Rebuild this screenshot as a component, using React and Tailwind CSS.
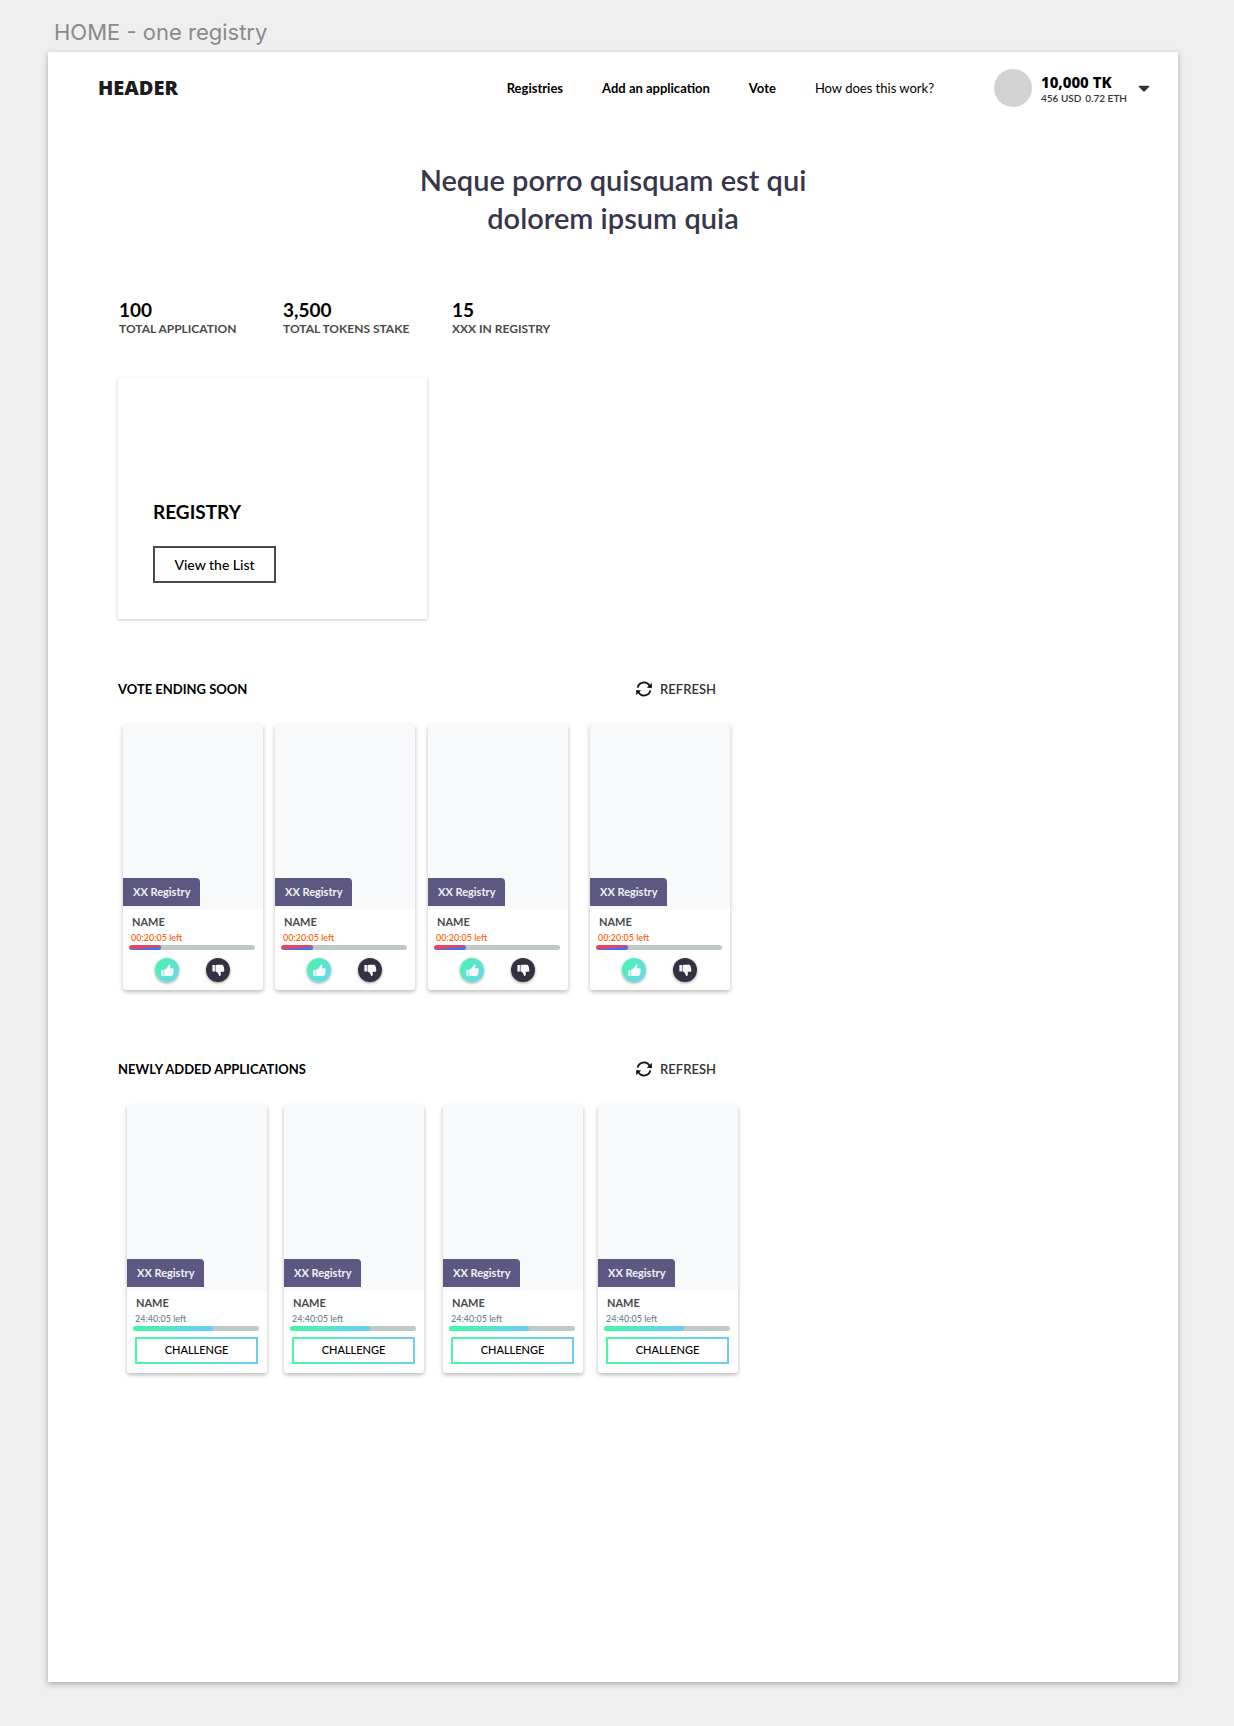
import React from "react";
import { FaCaretDown } from "react-icons/fa";

const stats = [
  { value: "100", label: "TOTAL APPLICATION", width: "w-[164px]" },
  { value: "3,500", label: "TOTAL TOKENS STAKE", width: "w-[169px]" },
  { value: "15", label: "XXX IN REGISTRY", width: "w-[120px]" },
];

const voteCards = ["ml-[5px]", "ml-3", "ml-[13px]", "ml-[22px]"];
const newCards = ["ml-[9px]", "ml-[17px]", "ml-[19px]", "ml-[15px]"];

function RefreshIcon() {
  return (
    <svg viewBox="0 0 16 16" className="size-4" aria-hidden="true">
      <path d="M1.7 6.6A6.4 6.4 0 0 1 13.5 4.6" fill="none" stroke="#111" strokeWidth="1.8" />
      <path d="M14.3 9.4A6.4 6.4 0 0 1 2.5 11.4" fill="none" stroke="#111" strokeWidth="1.8" />
      <path d="M15.9 2v5.2l-5.1-.6z" fill="#111" />
      <path d="M.2 14V8.9l5 .5z" fill="#111" />
    </svg>
  );
}

function ThumbUpIcon() {
  return (
    <svg viewBox="0 0 13 13" className="size-[13px]" fill="#f8f9fb" aria-hidden="true">
      <path d="M.3 6.2 2.5 5.8v6.3H.3z" />
      <path d="M3.1 5.9 5.6 4.3 7.9.9C8.3.4 9.3.4 9.4 1.2c.1.9-.2 2.2-.5 3.1h2.6c.8 0 1.2.5 1.2 1.1 0 2-.4 4.3-1 5.7-.3.7-.7 1-1.400 1H5.2L3.100 11.700z" />
    </svg>
  );
}

function ThumbDownIcon() {
  return (
    <svg viewBox="0 0 13 13" className="size-[13px]" fill="#f8f9fb" aria-hidden="true">
      <path d="M.4 1h2.500v6.500H.4z" />
      <path d="M3.500 1.300 5 .8h4.900c.8 0 1.200.4 1.500 1.100.6 1.500.9 2.900.9 4.800 0 .6-.4 1-1.100 1H8.600c.2.900.4 2.200.2 3.400-.1 1-1.400 1.100-1.800.3L5.800 8.700 3.500 7.300z" />
    </svg>
  );
}

function SectionHeader({ title }) {
  return (
    <div className="flex w-[598px] items-center justify-between">
      <h2 className="text-[13px] leading-5 font-bold text-black">{title}</h2>
      <button type="button" className="flex items-center gap-2 text-[13px] leading-5 font-semibold text-[#333]">
        <RefreshIcon />
        REFRESH
      </button>
    </div>
  );
}

function Card({ margin, timeLeft, timeColor, barClass, children }) {
  return (
    <article
      className={`w-[140px] shrink-0 rounded-[3px] bg-white shadow-[0_2px_4px_rgba(0,0,0,0.27)] ${margin}`}
    >
      <div className="flex h-[185px] items-end rounded-t-[3px] bg-[#f8f9fb] pb-[3px]">
        <span className="flex h-7 w-[77px] items-center rounded-tr-[4px] bg-[#5d5881] pl-2.5 text-[11px] font-bold text-[#f0f0f5]">
          XX Registry
        </span>
      </div>
      <div className="px-1.5 pt-[5px]">
        <h3 className="pl-[3px] text-[11px] leading-4 font-bold text-[#4a4a4a]">NAME</h3>
        <p className={`pl-0.5 text-[9px] leading-[15px] font-medium ${timeColor}`}>{timeLeft} left</p>
        <div className="h-[5px] w-[126px] overflow-hidden rounded-full bg-[#bfc9c7]">
          <div className={`h-full rounded-full ${barClass}`} />
        </div>
      </div>
      {children}
    </article>
  );
}

export default function App() {
  return (
    <div className="min-h-screen bg-[#efefef] pr-14 pb-11 pl-12 font-['Lato',sans-serif]">
      <p className="pt-4 pl-1.5 font-['Inter',sans-serif] text-[22px] leading-8 text-[#8b8b8b]">
        HOME - one registry
      </p>
      <div className="mt-1 bg-white pb-[309px] shadow-[0_2px_6px_rgba(0,0,0,0.3)]">
        <header className="flex h-[72px] items-center pr-[25px] pl-[50px]">
          <div className="font-['Open_Sans',sans-serif] text-xl leading-6 font-extrabold text-[#1c1b20]">HEADER</div>
          <nav className="ml-auto flex items-center gap-[39px] text-[13px] leading-5 font-bold text-black">
            <a href="#registries">Registries</a>
            <a href="#add">Add an application</a>
            <a href="#vote">Vote</a>
            <a href="#how" className="font-normal">How does this work?</a>
          </nav>
          <button type="button" aria-label="Account balance" className="ml-[60px] flex items-center text-left">
            <span className="size-[38px] rounded-full bg-[#d2d2d2]" />
            <span className="ml-[9px] flex w-[94px] flex-col pt-1">
              <span className="font-['Noto_Sans',sans-serif] text-[15px] leading-4 font-extrabold text-black">
                10,000 TK
              </span>
              <span className="flex gap-1 text-[10px] leading-4 font-semibold whitespace-nowrap text-[#333]">
                <span>456 USD</span>
                <span>0.72 ETH</span>
              </span>
            </span>
            <FaCaretDown className="size-[18px] text-[#333]" />
          </button>
        </header>

        <h1 className="mt-[37px] text-center text-[29px] leading-[38px] font-semibold text-[#38364a]">
          Neque porro quisquam est qui
          <br />
          dolorem ipsum quia
        </h1>

        <main className="pl-[70px]">
          <dl className="mt-[62px] flex pl-px">
            {stats.map((s) => (
              <div key={s.label} className={`flex flex-col-reverse ${s.width}`}>
                <dt className="text-xs leading-4 font-bold whitespace-nowrap text-[#4a4a4a]">{s.label}</dt>
                <dd className="text-[19px] leading-[22px] font-bold text-black">{s.value}</dd>
              </div>
            ))}
          </dl>

          <section className="mt-[41px] flex h-[241px] w-[309px] flex-col items-start justify-end bg-white pb-9 pl-[35px] shadow-[0_1px_3px_rgba(0,0,0,0.22)]">
            <h2 className="text-[19px] leading-6 font-bold text-black">REGISTRY</h2>
            <button
              type="button"
              className="mt-[22px] h-[37px] w-[123px] border-2 border-[#4a4a4a] text-sm font-medium text-black"
            >
              View the List
            </button>
          </section>

          <section className="mt-[60px]">
            <SectionHeader title="VOTE ENDING SOON" />
            <div className="mt-[25px] flex">
              {voteCards.map((margin, i) => (
                <Card
                  key={i}
                  margin={margin}
                  timeLeft="00:20:05"
                  timeColor="text-[#ff5a00]"
                  barClass="w-8 bg-linear-[176deg] from-[#ff3b4e] from-35% to-[#2b7bff] to-80%"
                >
                  <div className="flex gap-[27px] pt-2 pb-2 pl-8">
                    <button
                      type="button"
                      aria-label="Vote for"
                      className="flex size-6 items-center justify-center rounded-full bg-linear-to-br from-[#45f5a1] to-[#6cd3f5] shadow-[0_1px_3px_rgba(0,0,0,0.4)]"
                    >
                      <ThumbUpIcon />
                    </button>
                    <button
                      type="button"
                      aria-label="Vote against"
                      className="flex size-6 items-center justify-center rounded-full bg-[#343143] shadow-[0_1px_3px_rgba(0,0,0,0.4)]"
                    >
                      <ThumbDownIcon />
                    </button>
                  </div>
                </Card>
              ))}
            </div>
          </section>

          <section className="mt-[69px]">
            <SectionHeader title="NEWLY ADDED APPLICATIONS" />
            <div className="mt-[26px] flex">
              {newCards.map((margin, i) => (
                <Card
                  key={i}
                  margin={margin}
                  timeLeft="24:40:05"
                  timeColor="text-[#6b7f8c]"
                  barClass="w-20 bg-linear-to-r from-[#3dfa9b] to-[#6cc8fa]"
                >
                  <div className="pt-1.5 pr-[9px] pb-[9px] pl-2">
                    <button
                      type="button"
                      className="flex h-[27px] w-full bg-linear-to-r from-[#45fa9f] to-[#6ccbf7] p-[2px] text-[11px] font-medium text-black"
                    >
                      <span className="flex size-full items-center justify-center bg-white">CHALLENGE</span>
                    </button>
                  </div>
                </Card>
              ))}
            </div>
          </section>
        </main>
      </div>
    </div>
  );
}
